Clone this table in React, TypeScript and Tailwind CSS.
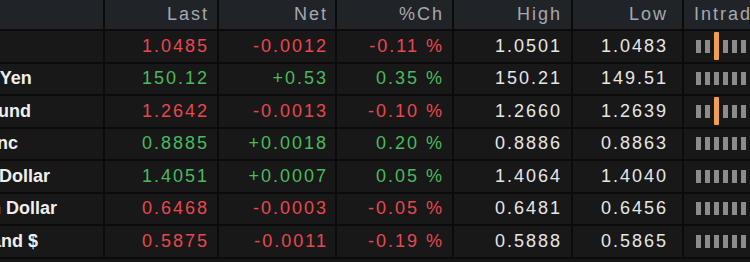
const rows = [
  { name: 'Euro', last: '1.0485', net: '-0.0012', pct: '-0.11 %', high: '1.0501', low: '1.0483', mark: 2 },
  { name: 'Japanese Yen', last: '150.12', net: '+0.53', pct: '0.35 %', high: '150.21', low: '149.51', mark: -1 },
  { name: 'British Pound', last: '1.2642', net: '-0.0013', pct: '-0.10 %', high: '1.2660', low: '1.2639', mark: 2 },
  { name: 'Swiss Franc', last: '0.8885', net: '+0.0018', pct: '0.20 %', high: '0.8886', low: '0.8863', mark: -1 },
  { name: 'Canadian Dollar', last: '1.4051', net: '+0.0007', pct: '0.05 %', high: '1.4064', low: '1.4040', mark: -1 },
  { name: 'Australian Dollar', last: '0.6468', net: '-0.0003', pct: '-0.05 %', high: '0.6481', low: '0.6456', mark: -1 },
  { name: 'New Zealand $', last: '0.5875', net: '-0.0011', pct: '-0.19 %', high: '0.5888', low: '0.5865', mark: -1 },
]

const cols = 'grid grid-cols-[105px_114px_118px_117px_119px_111px_1fr]'
const cell = 'flex items-center justify-end border-r-2 border-[#0b0b0b] whitespace-nowrap overflow-hidden'

function Bars({ mark }: { mark: number }) {
  return (
    <div className="flex items-center gap-[4px] pl-[12px] h-full">
      {[0, 1, 2, 3, 4, 5, 6, 7].map(i =>
        i === mark ? (
          <div key={i} className="w-[5px] h-[28px] shrink-0 bg-[#f2a04f] rounded-[1px]" />
        ) : (
          <div key={i} className="w-[5px] h-[13px] shrink-0 bg-[#8c8c8c]" />
        )
      )}
    </div>
  )
}

export default function App() {
  return (
    <div
      className="w-[750px] h-[262px] overflow-hidden bg-[#161616] text-[18px]"
      style={{ fontFamily: '"Liberation Sans", Arial, sans-serif' }}
    >
      {/* header */}
      <div className={`${cols} h-[31px] bg-[#202328] border-b-2 border-[#0b0b0b] text-[#a6a9ad] tracking-[2px]`}>
        <div className={cell} />
        <div className={`${cell} pr-[8px]`}>Last</div>
        <div className={`${cell} pr-[7px]`}>Net</div>
        <div className={`${cell} pr-[8px]`}>%Ch</div>
        <div className={`${cell} pr-[9px]`}>High</div>
        <div className={`${cell} pr-[14px]`}>Low</div>
        <div className="flex items-center pl-[10px] whitespace-nowrap overflow-hidden">Intraday</div>
      </div>

      {rows.map(r => {
        const up = r.net.startsWith('+')
        const color = up ? 'text-[#48bb5d]' : 'text-[#e8474f]'
        return (
          <div key={r.name} className={`${cols} h-[32.5px] border-b-2 border-[#0b0b0b] bg-[#181818]`}>
            <div className="flex items-center border-r-2 border-[#0b0b0b] overflow-hidden whitespace-nowrap">
              <span className="ml-[-87px] font-bold text-[#eeeeee]">{r.name}</span>
            </div>
            <div className={`${cell} pr-[8px] tracking-[2px] ${color}`}>{r.last}</div>
            <div className={`${cell} pr-[7px] tracking-[2px] ${color}`}>{r.net}</div>
            <div className={`${cell} pr-[8px] tracking-[2px] ${color}`}>{r.pct}</div>
            <div className={`${cell} pr-[9px] tracking-[2px] text-[#e6e6e6]`}>{r.high}</div>
            <div className={`${cell} pr-[14px] tracking-[2px] text-[#e6e6e6]`}>{r.low}</div>
            <div className="overflow-hidden">
              <Bars mark={r.mark} />
            </div>
          </div>
        )
      })}
    </div>
  )
}
